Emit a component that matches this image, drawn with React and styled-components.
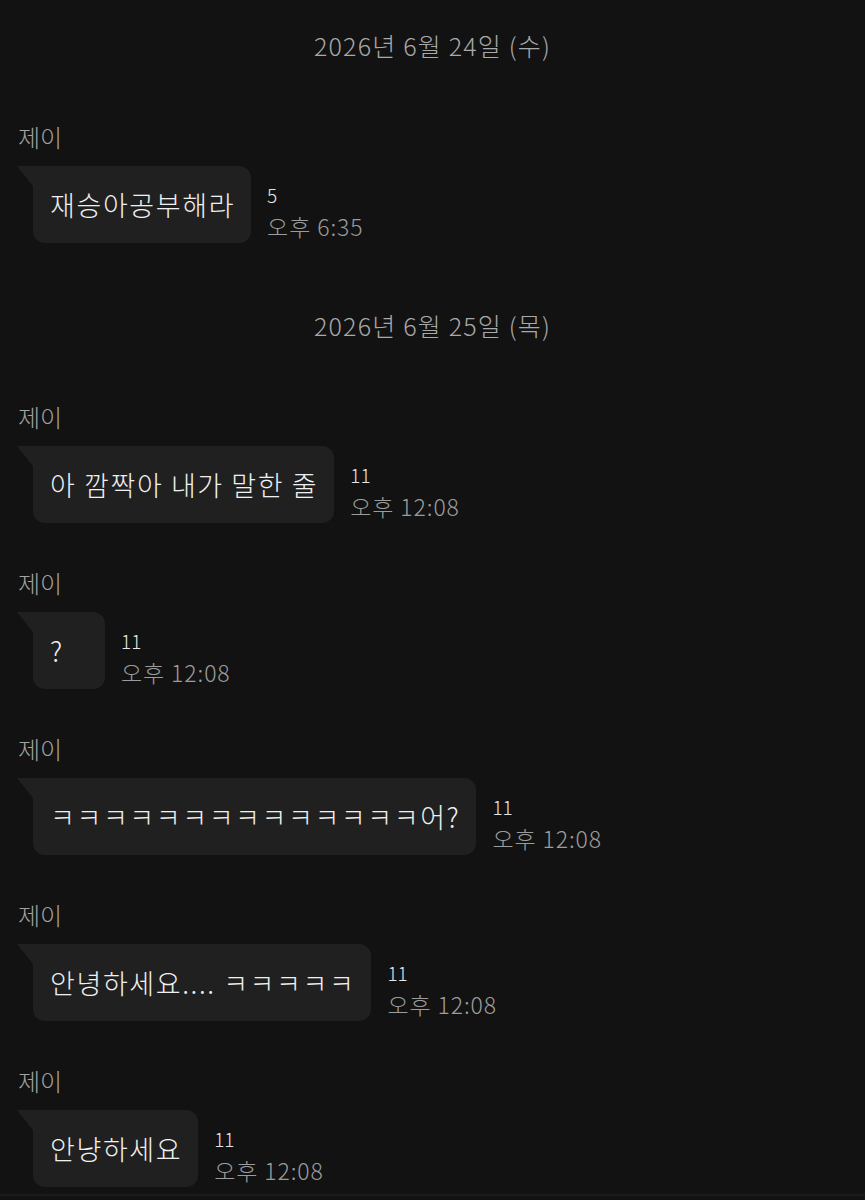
import React from "react";
import styled, { createGlobalStyle } from "styled-components";

const Global = createGlobalStyle`
  html, body { margin: 0; padding: 0; background: #121212; }
  body { font-family: "Noto Sans CJK KR", "Noto Sans", sans-serif; }
`;

const Screen = styled.div`
  width: 865px;
  min-height: 1200px;
  background: #121212;
  display: flex;
  flex-direction: column;
  box-sizing: border-box;
`;

const DateDivider = styled.div`
  height: 90px;
  display: flex;
  align-items: center;
  justify-content: center;
  color: #a9a9a9;
  font-size: 25px;
  font-weight: 300;
  letter-spacing: 1.2px;
`;

const Group = styled.div`
  display: flex;
  flex-direction: column;
  align-items: flex-start;
  padding-left: 18px;
  margin-top: 45px;
  ${DateDivider} + & { margin-top: 32px; }
  & + ${DateDivider} { margin-top: 37px; }
`;

const Sender = styled.div`
  color: #a3a3a3;
  font-size: 24px;
  font-weight: 300;
  line-height: 30px;
  margin-bottom: 14px;
`;

const Row = styled.div`
  display: flex;
  align-items: flex-end;
  gap: 16px;
  padding-left: 15px;
`;

const Bubble = styled.div`
  position: relative;
  background: #202020;
  color: #f0f0f0;
  font-size: 27px;
  font-weight: 300;
  letter-spacing: 1.6px;
  line-height: 39px;
  padding: 19px 16px 19px 17px;
  min-width: 72px;
  box-sizing: border-box;
  border-radius: 0 12px 12px 12px;
  white-space: nowrap;
  &::before {
    content: "";
    position: absolute;
    left: -16px;
    top: 0;
    width: 16px;
    height: 20px;
    background: #202020;
    clip-path: polygon(0 0, 100% 0, 100% 100%);
  }
`;

const Meta = styled.div`
  display: flex;
  flex-direction: column;
  gap: 6px;
  padding-bottom: 3px;
`;

const Count = styled.span`
  color: #e6e6e6;
  font-size: 19px;
  font-weight: 300;
  line-height: 22px;
`;

const Time = styled.span`
  color: #9c9c9c;
  font-size: 23px;
  font-weight: 300;
  letter-spacing: 0.9px;
  line-height: 28px;
  white-space: nowrap;
`;

const Spacer = styled.div`
  flex: 1;
`;

const BottomEdge = styled.div`
  height: 2px;
  background: #1b1b1b;
  margin-bottom: 4px;
`;

const data = [
  { date: "2026년 6월 24일 (수)" },
  { name: "제이", text: "재승아공부해라", count: "5", time: "오후 6:35" },
  { date: "2026년 6월 25일 (목)" },
  { name: "제이", text: "아 깜짝아 내가 말한 줄", count: "11", time: "오후 12:08" },
  { name: "제이", text: "?", count: "11", time: "오후 12:08" },
  { name: "제이", text: "ㅋㅋㅋㅋㅋㅋㅋㅋㅋㅋㅋㅋㅋㅋ어?", count: "11", time: "오후 12:08" },
  { name: "제이", text: "안녕하세요.... ㅋㅋㅋㅋㅋ", count: "11", time: "오후 12:08" },
  { name: "제이", text: "안냥하세요", count: "11", time: "오후 12:08" },
];

export default function App() {
  return (
    <>
      <Global />
      <Screen>
        {data.map((item, i) =>
          item.date ? (
            <DateDivider key={i}>{item.date}</DateDivider>
          ) : (
            <Group key={i}>
              <Sender>{item.name}</Sender>
              <Row>
                <Bubble>{item.text}</Bubble>
                <Meta>
                  <Count>{item.count}</Count>
                  <Time>{item.time}</Time>
                </Meta>
              </Row>
            </Group>
          )
        )}
        <Spacer />
        <BottomEdge />
      </Screen>
    </>
  );
}
